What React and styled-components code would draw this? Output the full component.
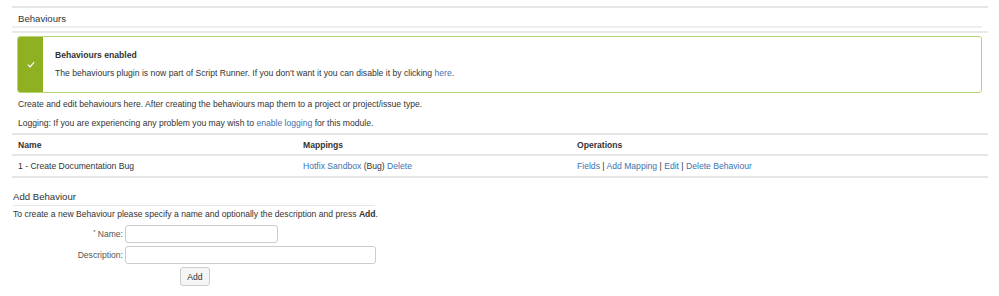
import React from "react";
import styled, { createGlobalStyle } from "styled-components";

const Global = createGlobalStyle`
  body {
    margin: 0;
    background: #fff;
    font-family: "Liberation Sans", Arial, sans-serif;
    font-size: 8.6px;
    color: #333;
  }
`;

const Page = styled.div`
  padding: 6px 11px 0 12px;
`;

const TopRule = styled.div`
  border-top: 2px solid #e6e6e6;
`;

const Title = styled.h2`
  margin: 0 6px 0 0;
  padding: 5px 6px 1px;
  font-size: 9.6px;
  font-weight: 400;
  line-height: 12px;
  color: #333;
  border-bottom: 2px solid #eee;
`;

const TitleRule = styled.div`
  margin-top: 3px;
  border-top: 2px solid #e9e9e9;
`;

const Message = styled.div`
  display: flex;
  margin: 3px 6px 0 5px;
  height: 55px;
  border: 1px solid #b6d575;
  border-radius: 3px;
  overflow: hidden;
`;

const Stripe = styled.div`
  width: 25px;
  flex: none;
  background: #8eb021;
  display: flex;
  align-items: center;
  justify-content: center;
`;

const MsgBody = styled.div`
  padding: 12px 12px 0 12px;
`;

const MsgTitle = styled.div`
  font-weight: 700;
  line-height: 12px;
  color: #333;
`;

const Para = styled.p`
  margin: ${(p) => p.$m || "0"};
  line-height: 12px;
  padding-left: ${(p) => p.$pl || "0"};
`;

const Link = styled.a`
  color: #3b73af;
  text-decoration: none;
`;

const Table = styled.div`
  margin-top: 4px;
  border-top: 2px solid #e6e6e6;
`;

const Row = styled.div`
  display: grid;
  grid-template-columns: 285px 274px 1fr;
  height: ${(p) => (p.$head ? "19px" : "20px")};
  align-items: center;
  border-bottom: 2px solid #e6e6e6;
  font-weight: ${(p) => (p.$head ? 700 : 400)};
`;

const Cell = styled.div`
  padding-left: 6px;
`;

const Form = styled.div`
  margin-top: 13px;
  padding-left: 1px;
`;

const FormTitle = styled.h3`
  margin: 0;
  width: 362px;
  font-size: 9.6px;
  font-weight: 400;
  line-height: 12px;
  padding-bottom: 2px;
  border-bottom: 1px solid #e6e6e6;
`;

const Field = styled.div`
  display: flex;
  align-items: center;
  margin-top: ${(p) => p.$mt || "3px"};
`;

const Label = styled.label`
  width: 110px;
  text-align: right;
  padding-right: 2px;
  color: #555;
`;

const Req = styled.sup`
  font-size: 6px;
  vertical-align: 3px;
  margin-right: 2px;
`;

const Input = styled.input`
  box-sizing: border-box;
  width: ${(p) => p.$w};
  height: 18px;
  border: 1px solid #ccc;
  border-radius: 3px;
  padding: 0 4px;
  font: inherit;
`;

const Button = styled.button`
  box-sizing: border-box;
  margin-left: 167px;
  width: 30px;
  height: 19px;
  padding: 0;
  background: #f5f5f5;
  border: 1px solid #ccc;
  border-radius: 3px;
  font-family: "Liberation Sans", Arial, sans-serif;
  font-size: 8.6px;
  color: #333;
`;

const Check = () => (
  <svg width="8" height="7" viewBox="0 0 10 8">
    <path d="M1 4.2 L3.8 7 L9 1" fill="none" stroke="#fff" strokeWidth="1.5" />
  </svg>
);

export default function App() {
  return (
    <Page>
      <Global />
      <TopRule />
      <Title>Behaviours</Title>
      <TitleRule />
      <Message>
        <Stripe>
          <Check />
        </Stripe>
        <MsgBody>
          <MsgTitle>Behaviours enabled</MsgTitle>
          <Para $m="6px 0 0">
            The behaviours plugin is now part of Script Runner. If you don't want it you can disable it by clicking{" "}
            <Link href="#">here</Link>.
          </Para>
        </MsgBody>
      </Message>
      <Para $m="5px 0 0" $pl="6px">
        Create and edit behaviours here. After creating the behaviours map them to a project or project/issue type.
      </Para>
      <Para $m="7px 0 0" $pl="6px">
        Logging: If you are experiencing any problem you may wish to <Link href="#">enable logging</Link> for this module.
      </Para>
      <Table>
        <Row $head>
          <Cell>Name</Cell>
          <Cell>Mappings</Cell>
          <Cell>Operations</Cell>
        </Row>
        <Row>
          <Cell>1 - Create Documentation Bug</Cell>
          <Cell>
            <Link href="#">Hotfix Sandbox</Link> (Bug) <Link href="#">Delete</Link>
          </Cell>
          <Cell>
            <Link href="#">Fields</Link> | <Link href="#">Add Mapping</Link> | <Link href="#">Edit</Link> |{" "}
            <Link href="#">Delete Behaviour</Link>
          </Cell>
        </Row>
      </Table>
      <Form>
        <FormTitle>Add Behaviour</FormTitle>
        <Para $m="2px 0 0">
          To create a new Behaviour please specify a name and optionally the description and press <b>Add</b>.
        </Para>
        <Field $mt="5px">
          <Label>
            <Req>*</Req>Name:
          </Label>
          <Input $w="153px" />
        </Field>
        <Field>
          <Label>Description:</Label>
          <Input $w="251px" />
        </Field>
        <Field>
          <Button>Add</Button>
        </Field>
      </Form>
    </Page>
  );
}
